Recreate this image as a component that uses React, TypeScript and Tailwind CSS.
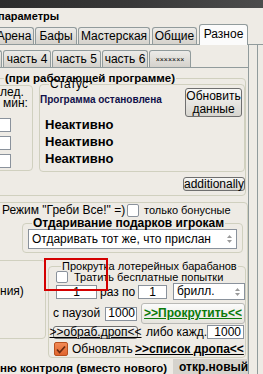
import React from 'react';

const font = "font-['Liberation_Sans','Arial',sans-serif]";

function Tab({ label, w, ml, active, small }: { label: string; w: string; ml: string; active?: boolean; small?: boolean }) {
  if (active) {
    return (
      <div className={`${w} ${ml} h-[21px] -mb-px flex items-center justify-center border border-b-0 border-[#919b9c] rounded-t-[3px] bg-[#fbfbfb] text-[12px] pb-[2px]`}>
        {label}
      </div>
    );
  }
  return (
    <div className={`${w} ${ml} h-[17px] flex items-center justify-center border border-b-0 border-[#919b9c] rounded-t-[3px] bg-gradient-to-b from-[#ecebe8] to-[#d5d2cc] ${small ? 'text-[7px]' : 'text-[12px]'}`}>
      {label}
    </div>
  );
}

function Field({ className, children }: { className: string; children?: React.ReactNode }) {
  return <div className={`bg-white border border-[#8a929c] flex items-center ${className}`}>{children}</div>;
}

function Spin() {
  return (
    <svg width="7" height="10" viewBox="0 0 7 10" className="shrink-0">
      <path d="M3.5 1 L6 4 L1 4 Z" fill="#9a9a9a" />
      <path d="M3.5 9 L6 6 L1 6 Z" fill="#9a9a9a" />
    </svg>
  );
}

function Box({ checked, className = '' }: { checked?: boolean; className?: string }) {
  if (checked) {
    return (
      <div className={`w-[14px] h-[14px] shrink-0 rounded-[2px] border border-[#b8501f] bg-gradient-to-b from-[#f28a55] to-[#e0642d] flex items-center justify-center ${className}`}>
        <svg width="10" height="9" viewBox="0 0 10 9">
          <path d="M1 4.5 L3.6 7.5 L9 1.5" stroke="#6a2a10" strokeWidth="1.8" fill="none" />
        </svg>
      </div>
    );
  }
  return <div className={`w-[12px] h-[13px] shrink-0 rounded-[2px] border border-[#8a929c] bg-white ${className}`} />;
}

const btn = 'border border-[#6f6f6f] rounded-[3px] bg-gradient-to-b from-[#f7f7f5] to-[#d7d5cf]';

export default function App() {
  return (
    <div className={`relative w-[263px] h-[374px] overflow-hidden bg-[#eeebe5] text-[12px] leading-[13px] text-black ${font}`}>
      <div className="h-[8px] bg-gradient-to-r from-[#2c2c2c] via-[#383838] to-[#4c4c4c]" />
      <div className="h-[16px] -ml-[2px] text-[11px] font-bold leading-[16px]">параметры</div>

      <div className="flex h-[21px] items-end border-b border-[#919b9c]">
        <Tab label="Арена" w="w-[40px]" ml="-ml-[6px]" />
        <Tab label="Бафы" w="w-[42px]" ml="ml-[1px]" />
        <Tab label="Мастерская" w="w-[72px]" ml="ml-[1px]" />
        <Tab label="Общие" w="w-[45px]" ml="ml-[2px]" />
        <Tab label="Разное" w="w-[49px]" ml="ml-[2px]" active />
      </div>

      <div className="w-[258px] h-[330px] border-r border-[#919b9c]">
        <div className="w-[249px] h-[330px] border-r border-[#919b9c]">
          <div className="flex h-[23px] items-end border-b border-[#919b9c]">
            <Tab label="" w="w-[12px]" ml="-ml-[10px]" />
            <Tab label="часть 4" w="w-[48px]" ml="ml-[1px]" />
            <Tab label="часть 5" w="w-[49px]" ml="ml-[1px]" />
            <Tab label="часть 6" w="w-[46px]" ml="ml-[1px]" />
            <Tab label="×××××××" w="w-[42px]" ml="ml-[1px]" small />
          </div>

          <div className="pt-[4px]">
            <fieldset className="-ml-[10px] w-[256px] h-[124px] border border-[#d0d0bf] rounded-[4px]">
              <legend className="ml-[13px] px-[1px] text-[11.5px] font-bold leading-[12px] whitespace-nowrap">(при работающей программе)</legend>
              <div className="flex h-[88px] items-start">
                <div className="mt-[1px] w-[42px] h-[86px] shrink-0 border border-[#d0d0bf] rounded-[4px] pl-[8px] pt-[1px]">
                  <div className="leading-[11px]">лед.</div>
                  <div className="pl-[3px] leading-[11px]">мин:</div>
                  <Field className="-ml-[17px] mt-[9px] w-[28px] h-[14px]" />
                  <Field className="-ml-[17px] mt-[4px] w-[28px] h-[14px]" />
                  <Field className="-ml-[17px] mt-[4px] w-[28px] h-[14px]" />
                </div>
                <fieldset className="ml-[6px] -mt-[5px] w-[206px] h-[93px] shrink-0 border border-[#d0d0bf] rounded-[4px]">
                  <legend className="ml-[9px] px-[1px] text-[12px] leading-[11px]">Статус</legend>
                  <div className="flex items-start">
                    <div className="mt-[4px] text-[10px] font-bold leading-[11px] text-[#10104a] whitespace-nowrap">Программа остановлена</div>
                    <div className={`ml-auto mr-[2px] -mt-[2px] w-[57px] h-[29px] ${btn} flex flex-col items-center justify-center text-[12px] leading-[13px]`}>
                      <span>Обновить</span>
                      <span>данные</span>
                    </div>
                  </div>
                  <div className="-mt-[1px] pl-[5px] text-[13px] font-bold leading-[17px]">
                    <div>Неактивно</div>
                    <div>Неактивно</div>
                    <div>Неактивно</div>
                  </div>
                </fieldset>
              </div>
              <div className="mt-[5px] flex justify-end">
                <div className={`w-[62px] h-[14px] ${btn} flex items-center justify-center text-[12px] leading-[12px]`}>additionally</div>
              </div>
            </fieldset>

            <div className="mt-[6px] -ml-[10px] w-[258px] h-[200px] border border-[#d0d0bf] rounded-[4px]">
              <div className="flex h-[14px] items-center">
                <span className="w-[136px] shrink-0 pl-[11px] whitespace-nowrap">Режим "Греби Все!" =)</span>
                <Box />
                <span className="ml-[5px] text-[11px] whitespace-nowrap">только бонусные</span>
              </div>

              <fieldset className="ml-[31px] w-[221px] h-[36px] border border-[#d0d0bf] rounded-[4px]">
                <legend className="ml-[9px] px-[1px] text-[12px] font-bold leading-[12px] whitespace-nowrap">Отдаривание подарков игрокам</legend>
                <Field className="ml-[5px] w-[209px] h-[20px] pl-[3px] pr-[3px] text-[12px] justify-between">
                  <span>Отдаривать тот же, что прислан</span>
                  <Spin />
                </Field>
              </fieldset>

              <div className="mt-[7px] flex items-start">
                <div className="w-[55px] h-[79px] shrink-0 border border-[#d0d0bf] rounded-[4px] pl-[8px] pt-[24px] text-[12px]">ния)</div>
                <fieldset className="ml-[2px] w-[198px] h-[98px] shrink-0 border border-[#d0d0bf] rounded-[4px]">
                  <legend className="ml-[12px] px-[1px] text-[11px] leading-[12px] whitespace-nowrap">Прокрутка лотерейных барабанов</legend>
                  <div className="-mt-[1px] flex items-center">
                    <Box className="ml-[7px] !h-[12px]" />
                    <span className="ml-[6px] text-[11px] leading-[12px] whitespace-nowrap">Тратить бесплатные попытки</span>
                  </div>
                  <div className="mt-[2px] flex items-start">
                    <Field className="ml-[7px] w-[41px] h-[14px] shrink-0 justify-center text-[12px]">1</Field>
                    <span className="ml-[3px] w-[38px] shrink-0 text-[12px] leading-[14px]">раз по</span>
                    <Field className="w-[29px] h-[14px] shrink-0 justify-center text-[12px]">1</Field>
                    <Field className="ml-[6px] -mt-[2px] w-[72px] h-[17px] shrink-0 pl-[3px] pr-[3px] justify-between text-[12px]">
                      <span>брилл.</span>
                      <Spin />
                    </Field>
                  </div>
                  <div className="mt-[3px] h-[21px] flex items-center">
                    <span className="ml-[4px] w-[52px] shrink-0 text-[12px] whitespace-nowrap">с паузой</span>
                    <Field className="w-[32px] h-[14px] shrink-0 justify-end pr-[1px] text-[12px] overflow-hidden">1000</Field>
                    <div className="ml-[4px] w-[104px] h-[21px] shrink-0 border border-[#b9b9b6] rounded-[3px] bg-gradient-to-b from-[#fbfbfa] to-[#e6e4de] flex items-center justify-center text-[12px] font-bold text-[#0a7a0a] underline whitespace-nowrap">&gt;&gt;Прокрутить&lt;&lt;</div>
                  </div>
                  <div className="mt-[1px] h-[14px] flex items-center">
                    <div className={`ml-[4px] w-[85px] h-[13px] shrink-0 ${btn} flex items-center justify-center text-[12px] leading-[12px] underline whitespace-nowrap`}>&gt;&gt;обраб.дроп&lt;&lt;</div>
                    <span className="ml-[8px] w-[61px] shrink-0 text-[12px] whitespace-nowrap">либо кажд.:</span>
                    <Field className="w-[37px] h-[14px] shrink-0 justify-end pr-[2px] text-[12px]">1000</Field>
                  </div>
                  <div className="mt-[3px] flex items-center">
                    <Box checked className="ml-[5px]" />
                    <span className="ml-[4px] w-[63px] shrink-0 text-[12px]">Обновлять</span>
                    <span className="text-[12px] font-bold underline whitespace-nowrap">&gt;&gt;список дропа&lt;&lt;</span>
                  </div>
                </fieldset>
              </div>

              <div className="mt-[1px] flex items-end h-[16px]">
                <span className="pl-[9px] w-[182px] shrink-0 overflow-hidden text-[11.5px] font-bold leading-[13px] whitespace-nowrap">ню контроля (вместо нового)</span>
                <div className="h-[16px] w-[75px] shrink-0 bg-[#d6d3cd] pl-[6px] text-[12px] font-bold leading-[16px]">откр.новый</div>
              </div>
            </div>
          </div>
        </div>
      </div>

      <div className="absolute left-[44px] top-[258px] w-[64px] h-[33px] border-2 border-[#d40000]" />
    </div>
  );
}
